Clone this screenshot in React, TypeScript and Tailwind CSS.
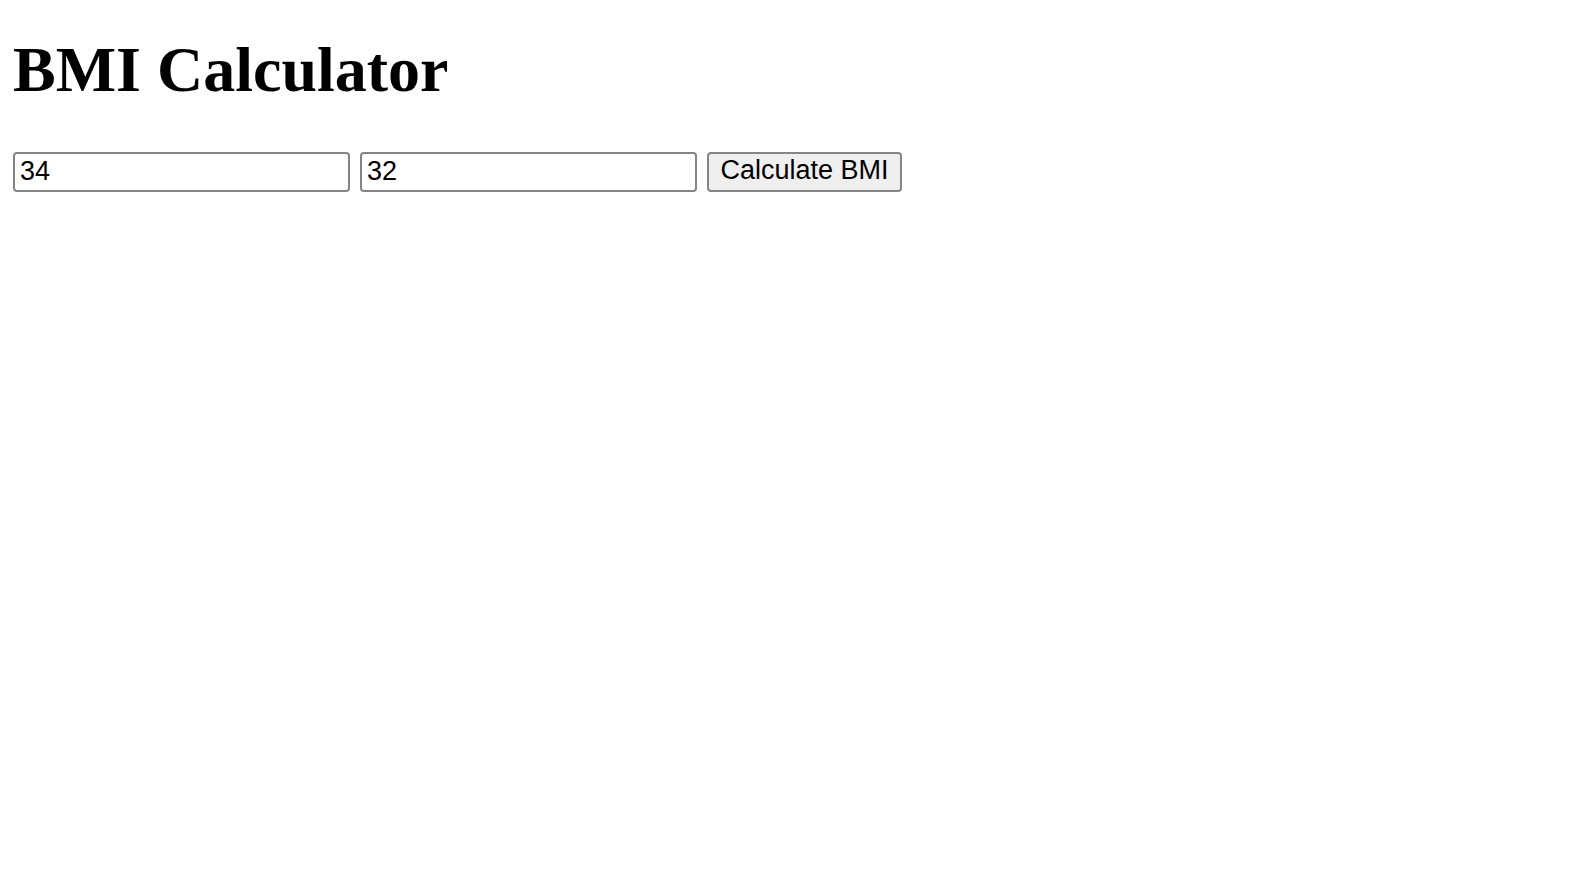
import React from "react";

export default function App() {
  return (
    <div className="min-h-screen bg-white px-[13px] text-black">
      <h1
        className="mt-[33px] text-[64px] font-bold leading-[74px]"
        style={{ fontFamily: '"Liberation Serif", "Times New Roman", serif' }}
      >
        BMI Calculator
      </h1>
      <div
        className="mt-[45px] flex items-center"
        style={{ fontFamily: '"Liberation Sans", Arial, sans-serif' }}
      >
        <input
          type="text"
          defaultValue="34"
          className="box-border h-[40px] w-[337px] rounded-[4px] border-2 border-[#858585] bg-white px-[5px] pb-[2px] text-[27px] leading-[normal] text-black outline-none"
        />
        <input
          type="text"
          defaultValue="32"
          className="ml-[10px] box-border h-[40px] w-[337px] rounded-[4px] border-2 border-[#858585] bg-white px-[5px] pb-[2px] text-[27px] leading-[normal] text-black outline-none"
        />
        <button
          type="button"
          className="ml-[10px] box-border flex h-[40px] w-[195px] items-center justify-center rounded-[4px] border-2 border-[#858585] bg-[#efefef] pb-[3px] text-[27px] leading-[normal] text-black"
        >
          Calculate BMI
        </button>
      </div>
    </div>
  );
}
